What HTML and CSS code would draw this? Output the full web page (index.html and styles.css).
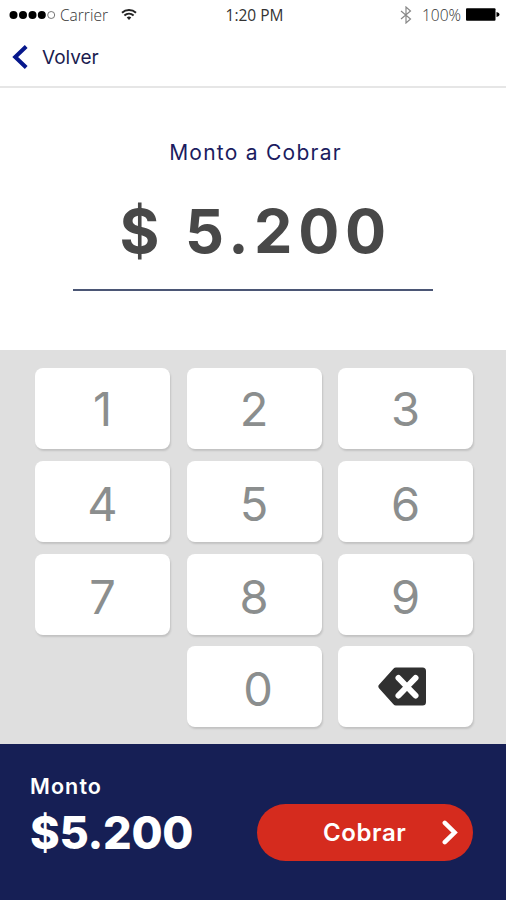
FILE: index.html
```html
<!DOCTYPE html>
<html lang="es">

<head>
    <meta charset="UTF-8">
    <meta name="viewport" content="width=device-width, initial-scale=1.0">
    <title>Monto a Cobrar</title>
    <link rel="stylesheet" href="styles.css">
</head>

<body>
    <div class="status-bar">
        <div class="status-left">
            <svg class="signal" width="47" height="10" viewBox="0 0 47 10">
                <circle cx="4.5" cy="5" r="4"/>
                <circle cx="14" cy="5" r="4"/>
                <circle cx="23.5" cy="5" r="4"/>
                <circle cx="32.8" cy="5" r="4"/>
                <circle cx="42.2" cy="5" r="3.5" fill="none" stroke="#666" stroke-width="0.9"/>
            </svg>
            <span class="carrier">Carrier</span>
            <svg class="wifi" width="16" height="13" viewBox="0 0 16 13" fill="none" stroke="#222" stroke-width="2">
                <path d="M1 4.7a10.5 10.5 0 0 1 14 0"/>
                <path d="M3.4 7.5a7 7 0 0 1 9.2 0"/>
                <path d="M5.7 9.4L8 12l2.3-2.6a3.6 3.6 0 0 0-4.6 0z" fill="#222" stroke="none"/>
            </svg>
        </div>
        <span class="time">1:20 PM</span>
        <div class="status-right">
            <svg width="12" height="18" viewBox="0 0 12 18" fill="none" stroke="#888" stroke-width="1.2">
                <path d="M1 5l9.5 8L6 17V1l4.5 4L1 13"/>
            </svg>
            <span class="percent">100%</span>
            <svg class="battery" width="34" height="13" viewBox="0 0 34 13">
                <rect x="0" y="0.3" width="29.5" height="12.4" rx="1"/>
                <path d="M30.5 4c2 .5 3 1.400 3 2.500s-1 2-3 2.500z"/>
            </svg>
        </div>
    </div>

    <header>
        <a class="back" href="#">
            <svg width="16" height="24" viewBox="0 0 16 24" fill="none" stroke="#06178c" stroke-width="4">
                <path d="M14.200 1.500L3.200 12l11 10.500"/>
            </svg>
            <span>Volver</span>
        </a>
    </header>

    <section class="amount">
        <h1>Monto a Cobrar</h1>
        <p>$ 5.200</p>
    </section>

    <section class="keypad">
        <button class="key">1</button>
        <button class="key">2</button>
        <button class="key">3</button>
        <button class="key low">4</button>
        <button class="key low">5</button>
        <button class="key low">6</button>
        <button class="key low">7</button>
        <button class="key low">8</button>
        <button class="key low">9</button>
        <button class="key zero low">0</button>
        <button class="key delete" aria-label="Borrar">
            <svg width="49" height="39" viewBox="0 0 49 39">
                <path d="M18 .5h26.500a3.500 3.500 0 0 1 3.500 3.500v31a3.500 3.500 0 0 1-3.500 3.500H18q-1.500 0-2.600-1.200L1 21.200q-1.400-1.700 0-3.400L15.400 1.700Q16.500.5 18 .5z" fill="#303030"/>
                <path d="M20.500 11l17 17.500M37.500 11l-17 17.500" fill="none" stroke="#fff" stroke-width="6" stroke-linecap="round"/>
            </svg>
        </button>
    </section>

    <footer>
        <div class="total">
            <span class="total-label">Monto</span>
            <span class="total-value">$5.200</span>
        </div>
        <button class="charge">
            <span>Cobrar</span>
            <svg width="16" height="25" viewBox="0 0 16 25" fill="none" stroke="#fff" stroke-width="4.500" stroke-linecap="round">
                <path d="M2.800 2.800L12.600 12.500l-9.800 9.700"/>
            </svg>
        </button>
    </footer>
</body>
</html>
```
FILE: styles.css
```css
* {
    box-sizing: border-box;
}

body {
    margin: 0;
    height: 900px;
    display: flex;
    flex-direction: column;
    overflow: hidden;
    background-color: #fff;
    font-family: Inter, sans-serif;
}

svg {
    display: block;
    flex-shrink: 0;
}

button {
    border: none;
    padding: 0;
    font-family: inherit;
    cursor: pointer;
}

/* Status bar */
.status-bar {
    display: grid;
    grid-template-columns: 1fr auto 1fr;
    align-items: center;
    height: 29px;
    padding: 0 6px 0 9px;
    font-family: "Open Sans", sans-serif;
    font-size: 15.5px;
    font-weight: 300;
    color: #333;
}

.status-left,
.status-right {
    display: flex;
    align-items: center;
}

.status-right {
    justify-content: flex-end;
}

.carrier {
    margin-left: 4px;
}

.wifi {
    margin-left: 13px;
}

.time {
    font-weight: 400;
}

.percent {
    margin: 0 5px 0 10px;
}

header {
    height: 59px;
    border-bottom: 2px solid #e6e6e6;
}

.back {
    display: flex;
    align-items: center;
    gap: 14px;
    height: 56px;
    padding-left: 12px;
    color: #1b1c50;
    font-size: 19px;
    text-decoration: none;
}

/* Amount */
.amount {
    height: 262px;
    padding: 52px 73px 0;
    text-align: center;
}

.amount h1 {
    margin: 0;
    padding-left: 5px;
    color: #1b1c60;
    font-size: 21px;
    font-weight: 400;
    line-height: 26px;
    letter-spacing: 1.25px;
}

.amount p {
    margin: 24px 0 0;
    padding-left: 5px;
    height: 101px;
    border-bottom: 2px solid #4b5675;
    color: #484848;
    font-size: 61px;
    font-weight: 700;
    line-height: 82px;
    letter-spacing: 5.6px;
}

/* Keypad */
.keypad {
    display: grid;
    grid-template-columns: repeat(3, 135px);
    grid-template-rows: repeat(4, 81px);
    gap: 11.6px 16.5px;
    height: 394px;
    padding: 18.4px 0 0 35px;
    background-color: #dfdfdf;
}

.key {
    display: flex;
    align-items: center;
    justify-content: center;
    border-radius: 8px;
    background-color: #fff;
    box-shadow: 1px 2px 2px rgba(0, 0, 0, 0.13);
    color: #8b8e8e;
    font-size: 47px;
    font-weight: 400;
}

.low {
    padding-top: 4px;
}

.zero {
    grid-column: 2;
    padding-left: 8px;
}

.delete {
    padding-right: 7px;
}

/* Footer */
footer {
    display: flex;
    justify-content: space-between;
    flex: 1;
    padding: 0 33px 0 30px;
    background-color: #161f55;
    color: #fff;
}

.total {
    display: flex;
    flex-direction: column;
    padding-top: 29px;
}

.total-label {
    font-size: 21.5px;
    font-weight: 600;
    line-height: 26px;
    letter-spacing: 1.1px;
}

.total-value {
    margin-top: 7px;
    font-size: 45px;
    font-weight: 800;
    line-height: 54px;
    letter-spacing: -0.3px;
}

.charge {
    display: flex;
    align-items: center;
    justify-content: space-between;
    width: 216px;
    height: 57px;
    margin-top: 60px;
    padding: 0 15px 0 66px;
    border-radius: 29px;
    background-color: #d52b1e;
    color: #fff;
    font-size: 24px;
    font-weight: 600;
    letter-spacing: 0.6px;
}
```
